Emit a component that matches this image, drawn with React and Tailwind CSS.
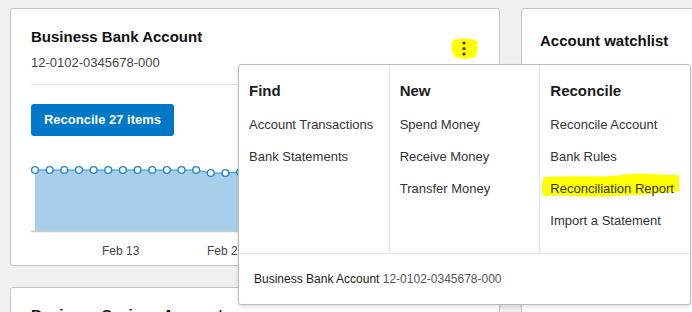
import React from 'react';

const points = [
  170, 170, 170, 170, 170, 170, 170, 170, 170, 170, 170, 170, 173, 173, 172, 172,
  172, 172, 172, 172, 172, 172, 172, 172, 172, 172, 172, 172, 172, 172, 172,
];

const Chart = () => {
  const x0 = 13;
  const step = 14.65;
  const coords = points.map((y, i) => [x0 + i * step, y - 150]);
  const line = coords.map(([x, y]) => `${x},${y}`).join(' ');
  const last = coords[coords.length - 1][0];
  return (
    <svg width="470" height="90" className="block">
      <polygon points={`${x0},81 ${line} ${last},81`} fill="#a8cfea" />
      <polyline points={line} fill="none" stroke="#2f8fd6" strokeWidth="1" />
      <line x1="9" y1="81.5" x2="470" y2="81.5" stroke="#c8c8c8" strokeWidth="1.5" />
      {coords.map(([x, y], i) => (
        <circle key={i} cx={x} cy={y} r="3.4" fill="#fff" stroke="#1f86d4" strokeWidth="1.4" />
      ))}
    </svg>
  );
};

const Menu = () => {
  const cols = [
    { title: 'Find', items: ['Account Transactions', 'Bank Statements'] },
    { title: 'New', items: ['Spend Money', 'Receive Money', 'Transfer Money'] },
    {
      title: 'Reconcile',
      items: ['Reconcile Account', 'Bank Rules', 'Reconciliation Report', 'Import a Statement'],
    },
  ];
  return (
    <div className="absolute left-[238px] top-[64px] w-[453px] h-[241px] bg-white border border-[#b9bcc1] rounded-[3px] shadow-[0_2px_4px_rgba(0,0,0,0.12)] flex flex-col">
      <div className="flex h-[189px] border-b border-[#e3e4e6]">
        {cols.map((col, ci) => (
          <div
            key={col.title}
            className={`flex-1 pl-[10px] pt-[17px] ${ci < 2 ? 'border-r border-[#e3e4e6]' : ''}`}
          >
            <div className="text-[15px] font-bold text-[#1c1c1c] leading-[18px]">{col.title}</div>
            <div className="mt-[17px] flex flex-col gap-[16px]">
              {col.items.map((item) => (
                <div key={item} className="relative text-[13px] leading-[16px] text-[#333]">
                  {item === 'Reconciliation Report' && (
                    <svg
                      className="absolute left-[-9px] top-[-9px]"
                      width="140"
                      height="28"
                      viewBox="0 0 140 28"
                    >
                      <path
                        d="M3 5 C 30 3, 60 6, 80 3 C 100 0, 118 3, 138 3 L 138 19 C 120 22, 95 23, 70 24 C 45 26, 20 22, 2 24 C 0 16, 1 10, 3 5 Z"
                        fill="#ffff00"
                      />
                    </svg>
                  )}
                  <span className="relative">{item}</span>
                </div>
              ))}
            </div>
          </div>
        ))}
      </div>
      <div className="pl-[15px] pt-[18px] text-[12px] leading-[15px]">
        <span className="text-[#222]">Business Bank Account</span>{' '}
        <span className="text-[#555]">12-0102-0345678-000</span>
      </div>
    </div>
  );
};

export default function App() {
  return (
    <div
      className="relative w-[692px] h-[312px] overflow-hidden bg-[#eff0f2]"
      style={{ fontFamily: '"Liberation Sans", Arial, sans-serif' }}
    >
      <div className="grid grid-cols-[490px_200px] gap-x-[21px] pl-[10px] pt-[8px]">
        <div className="flex flex-col gap-[21px]">
          <div className="relative h-[258px] bg-white border border-[#c3c5c9] rounded-[3px] px-[20px] pt-[19px]">
            <div className="text-[15px] font-bold text-[#111] leading-[18px]">Business Bank Account</div>
            <div className="mt-[9px] text-[13px] text-[#444] leading-[16px]">12-0102-0345678-000</div>
            <div className="mt-[13px] border-t border-[#e1e2e4]" />
            <button className="mt-[19px] h-[32px] w-[143px] rounded-[3px] bg-[#0078c8] text-white text-[13px] font-bold">
              Reconcile 27 items
            </button>
            <div className="-ml-[9px] mt-[14px]">
              <Chart />
            </div>
            <div className="relative h-[20px] text-[12px] text-[#444]">
              <span className="absolute left-[71px] top-[2px]">Feb 13</span>
              <span className="absolute left-[176px] top-[2px]">Feb 20</span>
            </div>
            <div className="absolute left-[438px] top-[28px] w-[30px] h-[24px]">
              <svg width="30" height="24" viewBox="0 0 30 24">
                <path d="M4 3 C 12 1, 22 1, 28 4 C 29 10, 28 17, 26 20 C 18 23, 10 22, 6 20 C 2 15, 2 8, 4 3 Z" fill="#ffff00" />
                <circle cx="15" cy="6" r="1.6" fill="#333" />
                <circle cx="15" cy="11.5" r="1.6" fill="#333" />
                <circle cx="15" cy="17" r="1.6" fill="#333" />
              </svg>
            </div>
          </div>
          <div className="h-[60px] bg-white border border-[#c3c5c9] rounded-[3px] px-[20px] pt-[18px]">
            <div className="text-[15px] font-bold text-[#111] leading-[18px]">Business Savings Account</div>
          </div>
        </div>
        <div className="h-[320px] bg-white border border-[#c3c5c9] rounded-[3px] pl-[18px] pt-[23px]">
          <div className="text-[15px] font-bold text-[#111] leading-[18px] whitespace-nowrap">Account watchlist</div>
        </div>
      </div>
      <Menu />
    </div>
  );
}
